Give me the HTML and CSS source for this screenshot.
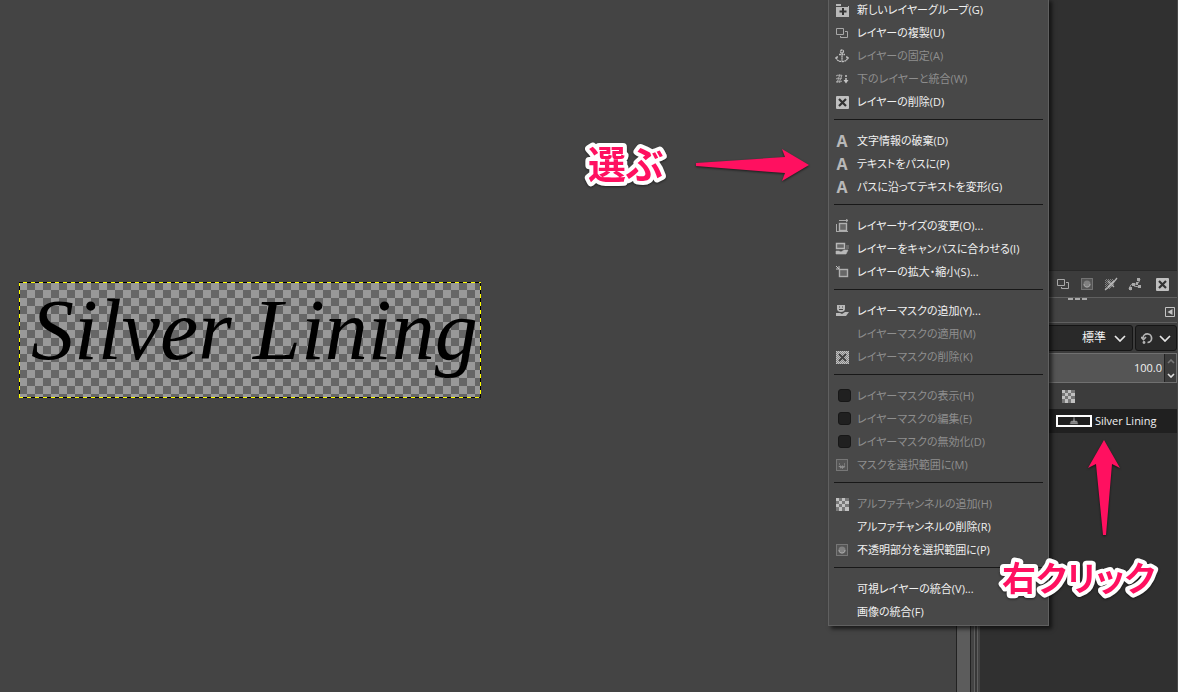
FILE: index.html
```html
<!DOCTYPE html>
<html lang="ja">
<head>
<meta charset="utf-8">
<meta name="viewport" content="width=device-width, initial-scale=1">
<title>Silver Lining</title>
<link rel="stylesheet" href="styles.css">
</head>
<body>
<svg class="defs" aria-hidden="true">
  <defs>
    <pattern id="dots" width="2" height="2" patternUnits="userSpaceOnUse"><path d="M0 0h1v1H0zM1 1h1v1H1z" fill="#c4c4c4"/></pattern>
    <symbol id="i-group" viewBox="0 0 14 14"><path d="M1 1h5v2h8v11H1z" fill="#b8b8b8"/><path d="M1 3.500h12" stroke="#484848"/><path d="M8 5v7M4.500 8.500h7" stroke="#333" stroke-width="2"/></symbol>
    <symbol id="i-dup" viewBox="0 0 14 14"><path d="M1.500 2.500h7v6h-7zM10 5.500h2.500v6h-7V10" fill="none" stroke="#a8a8a8"/></symbol>
    <symbol id="i-anchor" viewBox="0 0 14 14"><g fill="none" stroke="#bdbdbd" stroke-width="1.300" stroke-dasharray="2 .4"><circle cx="7" cy="2.500" r="1.500"/><path d="M7 4v8M4 5.500h6M1.500 8.500c0 2.500 2 4 5.500 4s5.500-1.500 5.500-4M1 10V8h2M13 10V8h-2"/></g></symbol>
    <symbol id="i-merge" viewBox="0 0 14 14"><path d="M1 4l2-1 2 1 2-1M1 7l2-1 2 1 2-1M1 10l2-1 2 1 2-1M5 2L2 11M7 3L4 11" fill="none" stroke="#aaa"/><path d="M11 3v7" stroke="#c4c4c4" stroke-width="1.500" stroke-dasharray="2 1"/><path d="M8.500 8h5L11 11.500z" fill="#c4c4c4"/></symbol>
    <symbol id="i-del" viewBox="0 0 14 14"><rect x="1" y="1" width="13" height="13" rx="1" fill="#c0c0c0"/><path d="M4 4l7 7M11 4l-7 7" stroke="#333" stroke-width="2.200"/></symbol>
    <symbol id="i-size" viewBox="0 0 14 14"><rect x="4.500" y="4.500" width="7" height="7" fill="#686868" stroke="#b0b0b0" stroke-width="1.400"/><path d="M4 1.500h9M1.500 5v8M11 0l2 1.500L11 3M1 12.500h12" fill="none" stroke="#aaa"/></symbol>
    <symbol id="i-fit" viewBox="0 0 14 14"><path d="M1.500 1.500h8v5h-8z" fill="#686868" stroke="#b8b8b8" stroke-width="1.400"/><path d="M1 9h3l2 1 3-2h4l-2 4H1zM11 4h3M11 6h3" fill="#b8b8b8" stroke="#b8b8b8" stroke-width=".6"/></symbol>
    <symbol id="i-scale" viewBox="0 0 14 14"><rect x="4.500" y="4.500" width="8" height="7" fill="#686868" stroke="#b0b0b0" stroke-width="1.400"/><path d="M1 1l3 3M4 1v3H1" fill="none" stroke="#c4c4c4"/></symbol>
    <symbol id="i-mask" viewBox="0 0 14 14"><path d="M2 1h8v4c0 2-2 3-4 3S2 7 2 5zM1 9h4l2 1 3-2h4l-3 4H1z" fill="#b8b8b8"/><path d="M4 3h1M7 3h1M4 5.500h4" stroke="#444"/></symbol>
    <symbol id="i-maskdel" viewBox="0 0 14 14"><path d="M1 1h13v13H1z" fill="#858585"/><path d="M1 1h13v13H1z" fill="url(#dots)"/><path d="M4 4l7 7M11 4l-7 7" stroke="#444" stroke-width="2"/></symbol>
    <symbol id="i-select" viewBox="0 0 14 14"><rect x="1.500" y="1.500" width="11" height="11" fill="#555" stroke="#a0a0a0" stroke-dasharray="1 1"/><path d="M4 6h1M9 6h1M4 8c1 3 5 3 6 0z" fill="#888" stroke="#999" stroke-dasharray="1 1"/></symbol>
    <symbol id="i-alpha" viewBox="0 0 14 14"><path d="M1 1h13v13H1z" fill="#777"/><path d="M1 1h3v3H1zM7 1h3v3H7zM4 4h3v3H4zM10 4h4v3h-4zM1 7h3v3H1zM7 7h3v3H7zM4 10h3v4H4zM10 10h4v4h-4z" fill="#c0c0c0"/></symbol>
    <symbol id="i-opaque" viewBox="0 0 14 14"><rect x="1.500" y="1.500" width="11" height="11" fill="#555" stroke="#a0a0a0" stroke-dasharray="1 1"/><circle cx="7" cy="7" r="3.500" fill="#808080"/><path d="M4 7c0 4 6 4 6 0" fill="none" stroke="#aaa"/></symbol>
    <symbol id="i-nopath" viewBox="0 0 14 14"><path d="M1 2h9v6l-4 4H1z" fill="url(#dots)" opacity=".5"/><path d="M4 4l6 6M10 4l-6 6M1 13l4-3 4-4 4-5" fill="none" stroke="#b4b4b4" stroke-width="1.300"/></symbol>
    <symbol id="i-path" viewBox="0 0 14 14"><path d="M1 12c2-5 3-6 6-5s4-2 5-5M2 13l2-1M6 9l5 1" fill="none" stroke="#aaa"/><path d="M1 10h3v3H1zM4 6h3v3H4zM9 1h3v3H9zM10 8h3v3h-3zM8 5h2v3H8z" fill="#aaa"/></symbol>
  </defs>
</svg>
<div class="app">
  <main class="canvas">
    <div class="layer"><span>Silver Lining</span></div>
  </main>
  <div class="scrollbar"></div>
  <div class="splitter"></div>
  <aside class="dock">
    <div class="preview"></div>
    <div class="tools">
      <button aria-label="レイヤーの複製"><svg><use href="#i-dup"/></svg></button>
      <button aria-label="不透明部分を選択範囲に"><svg><use href="#i-opaque"/></svg></button>
      <button aria-label="選択範囲をパスに"><svg><use href="#i-nopath"/></svg></button>
      <button aria-label="パスに沿って描画"><svg><use href="#i-path"/></svg></button>
      <button class="last" aria-label="削除"><svg><use href="#i-del"/></svg></button>
    </div>
    <div class="tabs">
      <div class="grip"><i></i><i></i><i></i></div>
      <button aria-label="タブの設定"><svg viewBox="0 0 10 10"><path d="M.5.5h9v9h-9z" fill="none" stroke="#c4c4c4"/><path d="M7.500 2v6L2.500 5z" fill="#c4c4c4"/></svg></button>
    </div>
    <div class="modes">
      <div class="mode">
        <select aria-label="モード"><option>標準</option></select>
        <svg class="chev" viewBox="0 0 12 7"><path d="M1 1l5 5 5-5" fill="none" stroke="#e6e6e6" stroke-width="1.700"/></svg>
      </div>
      <button class="reset" aria-label="モードの切り替え">
        <svg class="undo" viewBox="0 0 12 12"><path d="M2 6a4.300 4.300 0 1 1 4.500 4.500M0 5l2.500 2.500L5 5" fill="none" stroke="#b4b4b4" stroke-width="1.700"/><circle cx="3" cy="10.500" r="1.400" fill="#b4b4b4"/></svg>
        <svg class="chev" viewBox="0 0 12 7"><path d="M1 1l5 5 5-5" fill="none" stroke="#e6e6e6" stroke-width="1.700"/></svg>
      </button>
    </div>
    <div class="opacity">
      <input type="text" value="100.0" aria-label="不透明度">
      <div class="spin">
        <button aria-label="増やす"><svg viewBox="0 0 8 5"><path d="M1 4l3-3 3 3" fill="none" stroke="#777" stroke-width="1.600"/></svg></button>
        <button aria-label="減らす"><svg viewBox="0 0 8 5"><path d="M1 1l3 3 3-3" fill="none" stroke="#ddd" stroke-width="1.600"/></svg></button>
      </div>
    </div>
    <div class="locks"><button aria-label="透明部分を保護"><svg><use href="#i-alpha"/></svg></button></div>
    <div class="row">
      <div class="thumb"><svg viewBox="0 0 10 8"><path d="M1 7l1-3h2l1-4 1 4h2l1 3zM2 5.500h6" fill="#999" stroke="#666" stroke-width=".5"/></svg></div>
      <span>Silver Lining</span>
    </div>
    <div class="list"></div>
  </aside>
</div>

<div class="menu" role="menu">
  <button role="menuitem"><svg><use href="#i-group"/></svg>新しいレイヤーグループ(G)</button>
  <button role="menuitem"><svg><use href="#i-dup"/></svg>レイヤーの複製(U)</button>
  <button role="menuitem" disabled><svg><use href="#i-anchor"/></svg>レイヤーの固定(A)</button>
  <button role="menuitem" disabled><svg><use href="#i-merge"/></svg>下のレイヤーと統合(W)</button>
  <button role="menuitem"><svg><use href="#i-del"/></svg>レイヤーの削除(D)</button>
  <hr>
  <button role="menuitem"><b aria-hidden="true">A</b>文字情報の破棄(D)</button>
  <button role="menuitem"><b aria-hidden="true">A</b>テキストをパスに(P)</button>
  <button role="menuitem"><b aria-hidden="true">A</b>パスに沿ってテキストを変形(G)</button>
  <hr>
  <button role="menuitem"><svg><use href="#i-size"/></svg>レイヤーサイズの変更(O)...</button>
  <button role="menuitem"><svg><use href="#i-fit"/></svg>レイヤーをキャンバスに合わせる(I)</button>
  <button role="menuitem"><svg><use href="#i-scale"/></svg>レイヤーの拡大・縮小(S)...</button>
  <hr>
  <button role="menuitem"><svg><use href="#i-mask"/></svg>レイヤーマスクの追加(Y)...</button>
  <button role="menuitem" disabled><svg></svg>レイヤーマスクの適用(M)</button>
  <button role="menuitem" disabled><svg><use href="#i-maskdel"/></svg>レイヤーマスクの削除(K)</button>
  <hr>
  <label><input type="checkbox" disabled>レイヤーマスクの表示(H)</label>
  <label><input type="checkbox" disabled>レイヤーマスクの編集(E)</label>
  <label><input type="checkbox" disabled>レイヤーマスクの無効化(D)</label>
  <button role="menuitem" disabled><svg><use href="#i-select"/></svg>マスクを選択範囲に(M)</button>
  <hr>
  <button role="menuitem" disabled><svg><use href="#i-alpha"/></svg>アルファチャンネルの追加(H)</button>
  <button role="menuitem"><svg></svg>アルファチャンネルの削除(R)</button>
  <button role="menuitem"><svg><use href="#i-opaque"/></svg>不透明部分を選択範囲に(P)</button>
  <hr>
  <button role="menuitem"><svg></svg>可視レイヤーの統合(V)...</button>
  <button role="menuitem"><svg></svg>画像の統合(F)</button>
</div>

<svg class="note note-choose"><text x="6" y="42">選ぶ</text></svg>
<svg class="arrow arrow-right" viewBox="0 0 114 34"><path d="M0 14L89 8 86 0l27 16-27 16 3-8L0 17z" fill="#ff1060"/></svg>
<svg class="arrow arrow-up" viewBox="0 0 34 98"><path d="M16 0l16 28-8-4-6 71h-3L8 24l-8 4z" fill="#ff1060"/></svg>
<svg class="note note-click"><text x="6" y="42">右クリック</text></svg>
</body>
</html>
```

FILE: styles.css
```css
* { box-sizing: border-box; }

body {
  margin: 0;
  position: relative;
  min-height: 100vh;
  overflow: hidden;
  background: #444;
  color: #f0f0f0;
  font: 11px/16px "Open Sans", "Noto Sans CJK JP", sans-serif;
}

button, input, select {
  margin: 0;
  padding: 0;
  border: 0;
  background: none;
  color: inherit;
  font: inherit;
  appearance: none;
}

svg { display: block; width: 14px; height: 14px; flex: none; }
.defs { position: absolute; width: 0; height: 0; }

.app { display: flex; height: 100vh; }

.canvas { flex: 1; padding: 282px 0 0 19px; background: #444; }

.layer {
  width: 462px;
  height: 116px;
  padding: 9px 0 0 12px;
  background:
    repeating-linear-gradient(90deg, #000 0 4px, #ff0 4px 8px) top / 100% 1px no-repeat,
    repeating-linear-gradient(90deg, #ff0 0 4px, #000 4px 8px) bottom / 100% 1px no-repeat,
    repeating-linear-gradient(#ff0 0 4px, #000 4px 8px) left / 1px 100% no-repeat,
    repeating-linear-gradient(#000 0 4px, #ff0 4px 8px) right / 1px 100% no-repeat,
    conic-gradient(#666 25%, #999 0 50%, #666 0 75%, #999 0) 0 0 / 16px 16px;
  color: #000;
  font: italic 86px/78px "Liberation Serif", serif;
  white-space: nowrap;
}

.scrollbar { width: 15px; background: #5c5c5c; border: solid #222; border-width: 0 1px; }
.splitter {
  width: 9px;
  background: linear-gradient(90deg, #444 0 3px, #606060 3px 4px, #383838 4px 6px, #606060 6px 7px, #444 7px);
}

.dock {
  display: flex;
  flex-direction: column;
  width: 198px;
  background: #303030;
  border-right: 1px solid #484848;
}
.preview { height: 271px; border-bottom: 1px solid #292929; }

.tools {
  display: flex;
  justify-content: flex-end;
  align-items: center;
  gap: 10px;
  height: 26px;
  padding-right: 8px;
  background: #3c3c3c;
}
.tools .last { margin-left: 3px; }

.tabs {
  display: flex;
  justify-content: flex-end;
  height: 26px;
  background: #434343;
  border: solid #606060;
  border-width: 1px 0;
}
.tabs button { align-self: center; margin: 4px 2px 0 0; }
.tabs button svg { width: 10px; height: 10px; }
.grip { display: flex; gap: 2px; margin-right: 78px; }
.grip i { width: 5px; height: 2px; background: #aaa; }

.modes { display: flex; gap: 2px; height: 30px; padding: 2px 0; background: #3c3c3c; }
.mode, .reset { display: flex; align-items: center; background: #292929; border: 1px solid #151515; border-radius: 3px; }
.mode { flex: 1; justify-content: flex-end; gap: 8px; padding-right: 6px; }
.mode select { width: 24px; font-size: 12px; }
.reset { width: 42px; justify-content: center; gap: 6px; }
.chev { width: 12px; height: 7px; }
.undo { width: 12px; height: 12px; }

.opacity { display: flex; height: 30px; background: #555; border: 1px solid #707070; }
.opacity input { flex: 1; min-width: 0; padding-right: 2px; text-align: right; }
.spin { display: flex; flex-direction: column; width: 12px; border-left: 1px solid #222; background: #3c3c3c; }
.spin button { display: grid; flex: 1; place-items: center; }
.spin svg { width: 8px; height: 5px; }

.locks { display: flex; justify-content: flex-end; align-items: center; height: 26px; padding-right: 102px; background: #3c3c3c; }

.row { display: flex; align-items: center; gap: 3px; height: 24px; padding-left: 76px; background: #202020; white-space: nowrap; }
.thumb { display: grid; place-items: center; width: 36px; height: 12px; border: 2px solid #fff; }
.thumb svg { width: 10px; height: 8px; }
.list { flex: 1; }

.menu {
  position: absolute;
  top: -2px;
  right: 129px;
  width: 221px;
  padding-bottom: 2px;
  background: #484848;
  border: 1px solid #606060;
  border-top: 0;
  box-shadow: 3px 3px 4px rgba(0, 0, 0, .6);
  font-feature-settings: "palt";
}
.menu button, .menu label {
  display: flex;
  align-items: center;
  gap: 8px;
  width: 100%;
  height: 23px;
  padding-left: 6px;
  text-align: left;
  white-space: nowrap;
}
.menu button:disabled, .menu label { color: #8e8e8e; }
.menu b { width: 14px; color: #b8b8b8; font-size: 16px; text-align: center; }
.menu input { width: 13px; height: 13px; margin: 0 -2px 0 3px; background: #202020; border: 1px solid #171717; border-radius: 3px; }
.menu hr { height: 1px; margin: 6px 5px 9px; border: 0; background: #181818; }

.note {
  position: absolute;
  height: 56px;
  overflow: visible;
  fill: #ff1060;
  font-family: "Noto Sans CJK JP", sans-serif;
  font-weight: 700;
  font-feature-settings: "palt";
  stroke: #fff;
  stroke-width: 8px;
  stroke-linejoin: round;
  paint-order: stroke;
  filter: drop-shadow(0 1px 1px rgba(0, 0, 0, .5));
}
.note-choose { top: 136px; right: 508px; width: 88px; font-size: 38px; }
.note-click { top: 549px; right: 20px; width: 162px; font-size: 34px; }

.arrow { position: absolute; filter: drop-shadow(0 1px 1px rgba(0, 0, 0, .6)); }
.arrow-right { top: 149px; right: 368px; width: 114px; height: 34px; }
.arrow-up { top: 440px; right: 56px; width: 34px; height: 98px; }
```
